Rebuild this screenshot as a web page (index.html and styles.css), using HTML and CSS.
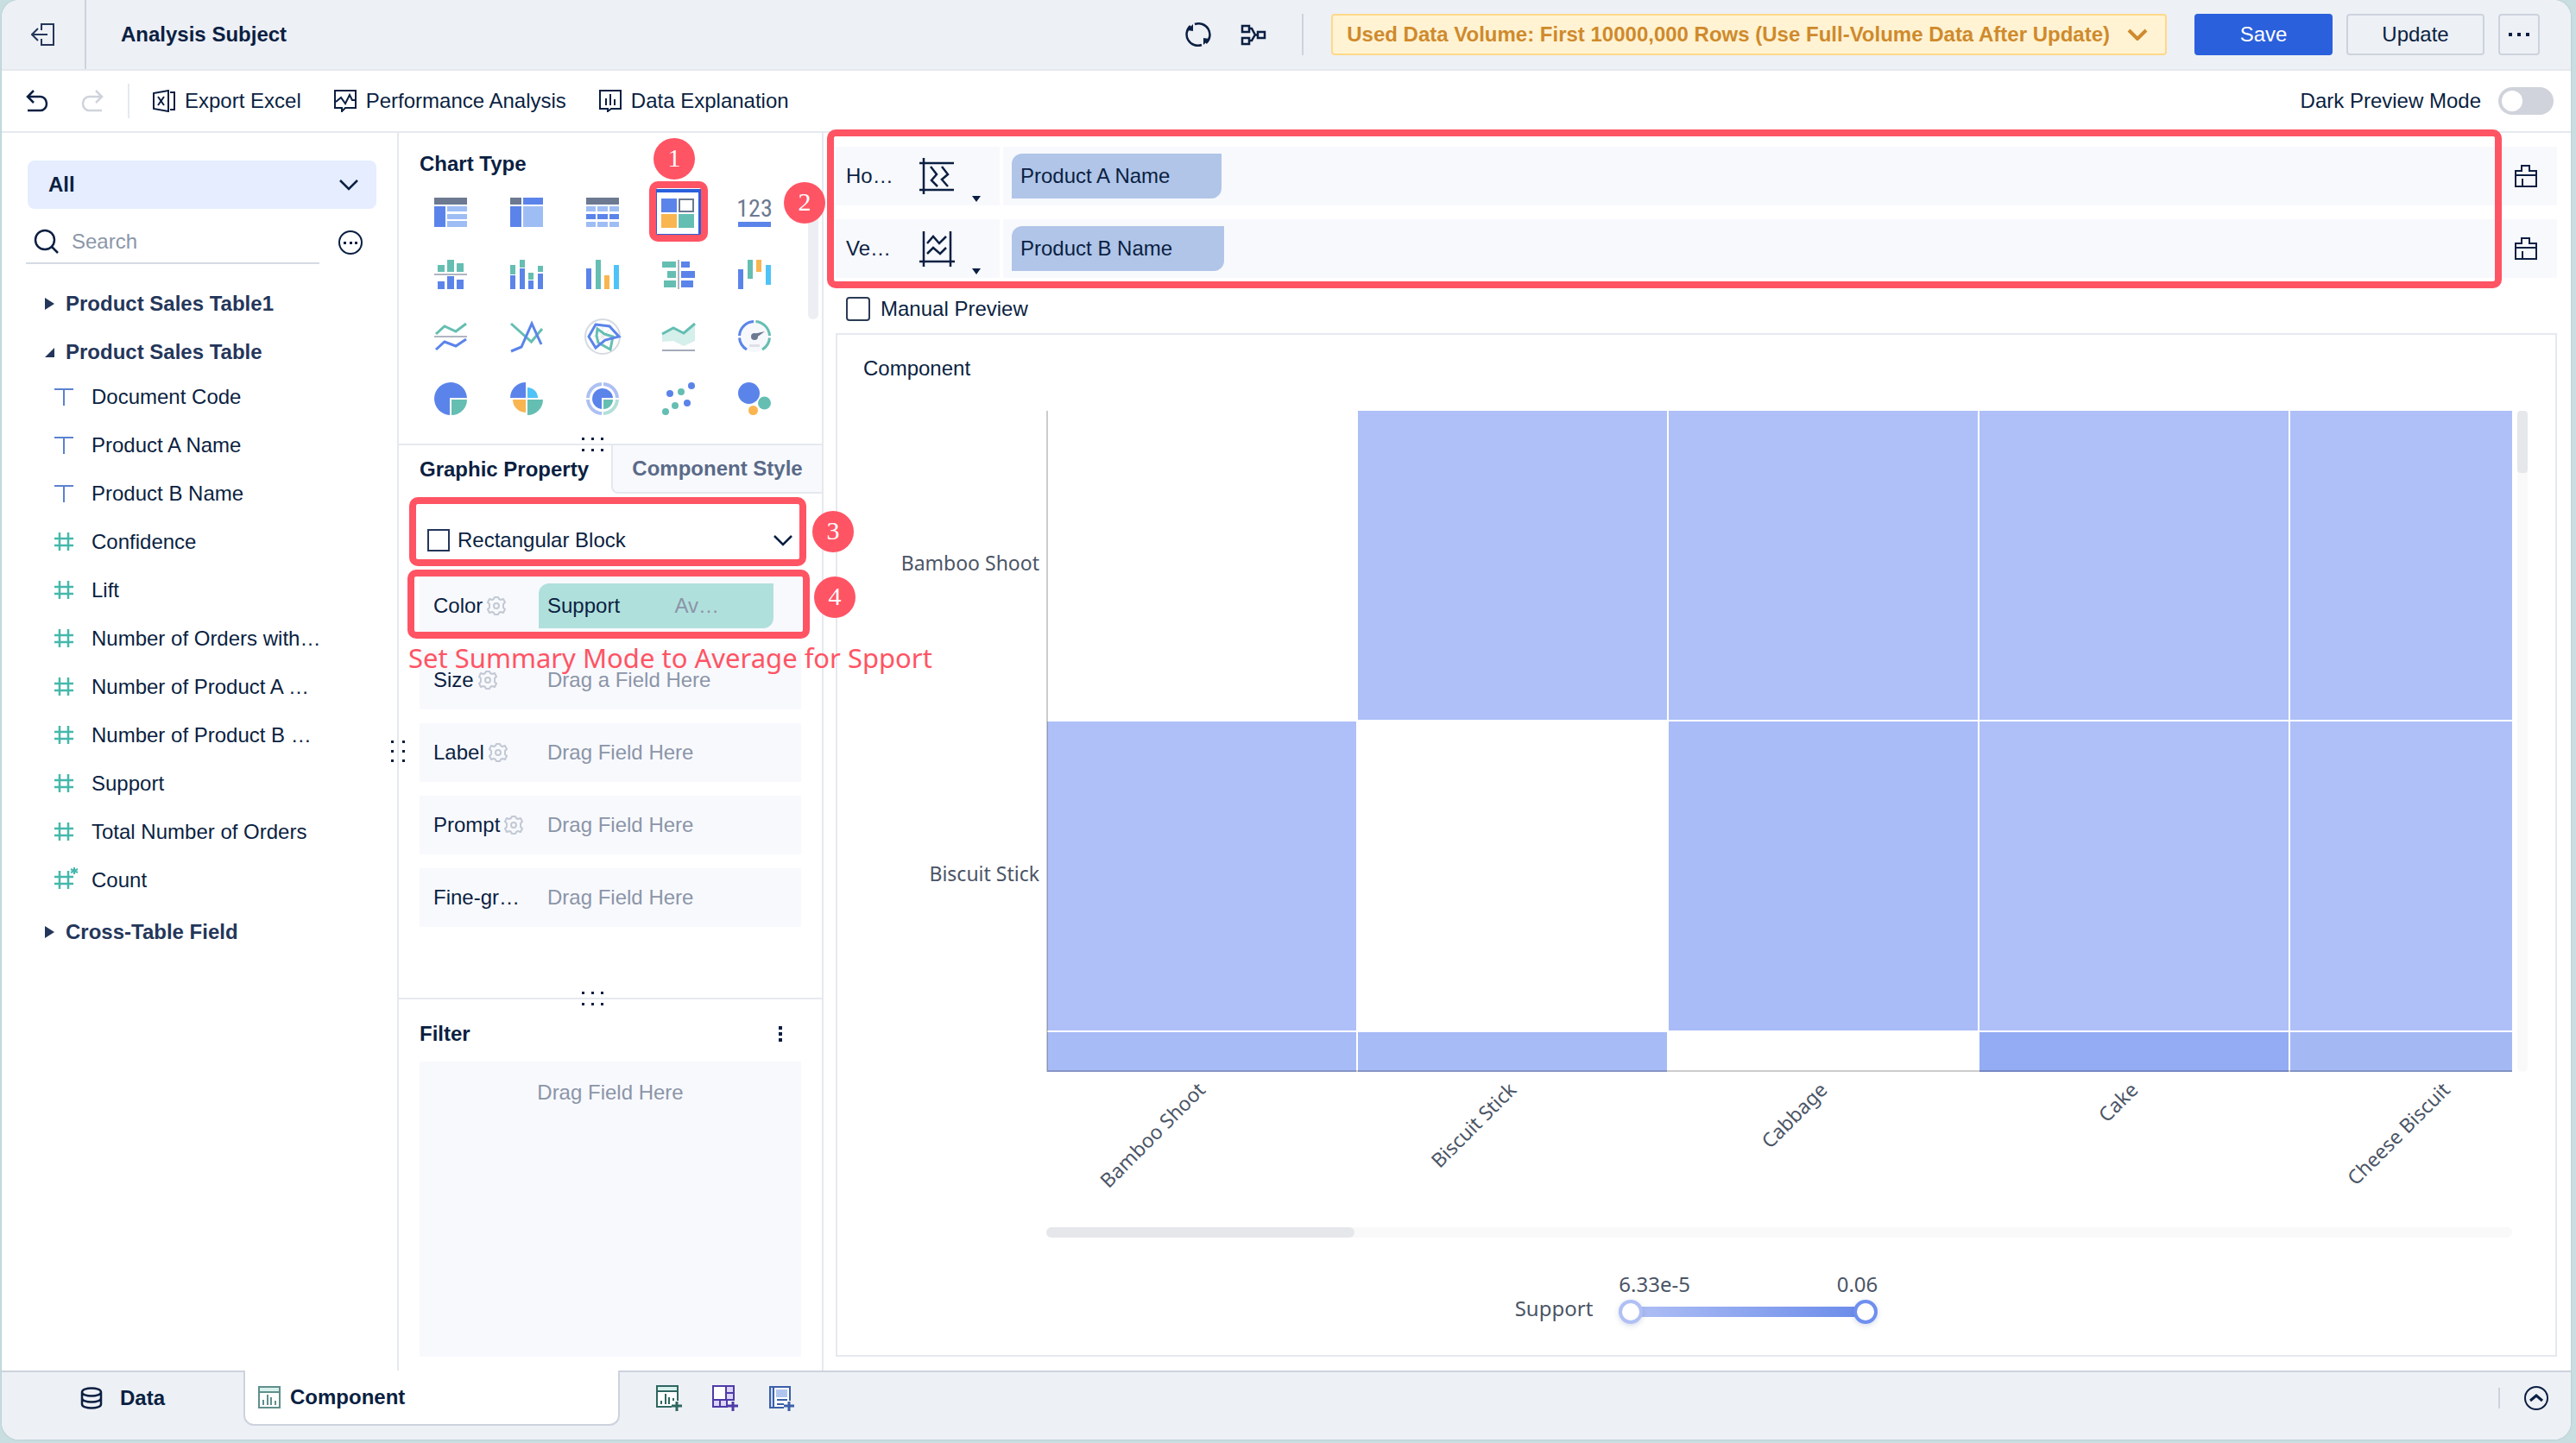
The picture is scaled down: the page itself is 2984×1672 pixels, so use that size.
FILE: index.html
```html
<!DOCTYPE html>
<html lang="en">
<head>
<meta charset="utf-8">
<title>Analysis Subject</title>
<link rel="stylesheet" href="styles.css">
</head>
<body>
<svg class="sprite" aria-hidden="true">
  <symbol id="i-text" viewBox="0 0 22 22"><path d="M0 2h22M11 2v19" fill="none" stroke="#5b82d0" stroke-width="2"/></symbol>
  <symbol id="i-num" viewBox="0 0 22 22"><path d="M0 7h22M0 15h22M6 0v21M16 0v21" fill="none" stroke="#45b8ac" stroke-width="2.500"/></symbol>
  <symbol id="i-gear" viewBox="0 0 22 22"><path d="M8 3l1-2h4l1 2 2 1 3-1 2 4-2 2v4l2 2-2 4-3-1-2 1-1 2H9l-1-2-2-1-3 1-2-4 2-2V9L1 7l2-4 3 1z" fill="none" stroke="#c3c9d4" stroke-width="2" stroke-linejoin="round"/><circle cx="11" cy="11" r="3" fill="none" stroke="#c3c9d4" stroke-width="2"/></symbol>
  <symbol id="i-down" viewBox="0 0 24 14"><path d="M2 2l10 10L22 2" fill="none" stroke="currentColor" stroke-width="2.500"/></symbol>
  <symbol id="i-brush" viewBox="0 0 26 26"><path d="M1 25V7h7V1h9v6h8v18zM1 12h24M9 16v9" fill="none" stroke="currentColor" stroke-width="2"/></symbol>
</svg>

<div class="app">
  <header class="header">
    <button class="back" aria-label="Exit"><svg width="28" height="28" viewBox="0 0 28 28"><path d="M12 9V2h14v24H12v-7M1 14h18M8 7l-7 7 7 7" fill="none" stroke="currentColor" stroke-width="2"/></svg></button>
    <h1 class="title">Analysis Subject</h1>
    <div class="header-icons">
      <button aria-label="Refresh"><svg width="30" height="30" viewBox="0 0 30 30"><path d="M6 5A13 13 0 0 0 19 27M24 25A13 13 0 0 0 11 3" fill="none" stroke="currentColor" stroke-width="2.500"/><path d="M2 10l7-7v8zM28 20l-7 7v-8z" fill="currentColor"/></svg></button>
      <button aria-label="Lineage"><svg width="30" height="26" viewBox="0 0 30 26"><path d="M2 3h8v7H2zM2 17h8v7H2zM20 10h8v7h-8zM10 6h3l4 7.500h3M10 20h3l4-7" fill="none" stroke="currentColor" stroke-width="2.500"/></svg></button>
    </div>
    <div class="header-actions">
      <button class="volume">Used Data Volume: First 10000,000 Rows (Use Full-Volume Data After Update)<svg width="24" height="14" viewBox="0 0 24 14"><path d="M2 2l10 10L22 2" fill="none" stroke="currentColor" stroke-width="4"/></svg></button>
      <div class="buttons">
        <button class="btn primary">Save</button>
        <button class="btn">Update</button>
        <button class="btn more" aria-label="More"><svg width="24" height="4" viewBox="0 0 24 4"><path d="M0 0h4v4H0zM10 0h4v4h-4zM20 0h4v4h-4z" fill="currentColor"/></svg></button>
      </div>
    </div>
  </header>

  <nav class="toolbar">
    <div class="history">
      <button aria-label="Undo"><svg width="26" height="26" viewBox="0 0 26 26"><path d="M9 1L2 8l7 7M2 8h15a7 8 0 0 1 0 16H2" fill="none" stroke="currentColor" stroke-width="2.500"/></svg></button>
      <button class="off" aria-label="Redo" disabled><svg width="26" height="26" viewBox="0 0 26 26"><path d="M17 1l7 7-7 7M24 8H9a7 8 0 0 0 0 16h15" fill="none" stroke="currentColor" stroke-width="2.500"/></svg></button>
    </div>
    <div class="tools">
      <button><svg width="26" height="26" viewBox="0 0 26 26"><path d="M1 4l17-3v24L1 22zM20 3h5v20h-5M6 8l7 10M13 8L6 18" fill="none" stroke="currentColor" stroke-width="2"/></svg>Export Excel</button>
      <button><svg width="26" height="26" viewBox="0 0 26 26"><path d="M1 1h24v20H13l-4 4v-4H1zM2 14l6-5 5 7 5-10 3 6h4" fill="none" stroke="currentColor" stroke-width="2"/></svg>Performance Analysis</button>
      <button><svg width="26" height="26" viewBox="0 0 26 26"><path d="M1 1h24v21H14l-4 3v-3H1zM8 10v8M13 5v13M18 11v7" fill="none" stroke="currentColor" stroke-width="2"/></svg>Data Explanation</button>
    </div>
    <label class="dark">Dark Preview Mode<input type="checkbox" class="switch"></label>
  </nav>

  <main class="workspace">
    <aside class="fields">
      <button class="source">All<svg width="24" height="14"><use href="#i-down"/></svg></button>
      <div class="search-row">
        <label class="search">
          <svg width="30" height="30" viewBox="0 0 30 30"><circle cx="13" cy="13" r="11" fill="none" stroke="currentColor" stroke-width="2.500"/><path d="M21 21l7 7" stroke="currentColor" stroke-width="2.500"/></svg>
          <input type="text" placeholder="Search" aria-label="Search fields">
        </label>
        <button aria-label="Field options"><svg width="30" height="30" viewBox="0 0 30 30"><circle cx="15" cy="15" r="13" fill="none" stroke="currentColor" stroke-width="2"/><path d="M7 14h3v3H7zM14 14h3v3h-3zM20 14h3v3h-3z" fill="currentColor"/></svg></button>
      </div>
      <h2 class="group"><svg width="11" height="14"><path d="M0 0l11 7-11 7z" fill="currentColor"/></svg>Product Sales Table1</h2>
      <h2 class="group"><svg width="11" height="11"><path d="M11 0v11H0z" fill="currentColor"/></svg>Product Sales Table</h2>
      <ul class="field-list">
        <li><svg width="22" height="22"><use href="#i-text"/></svg>Document Code</li>
        <li><svg width="22" height="22"><use href="#i-text"/></svg>Product A Name</li>
        <li><svg width="22" height="22"><use href="#i-text"/></svg>Product B Name</li>
        <li><svg width="22" height="22"><use href="#i-num"/></svg>Confidence</li>
        <li><svg width="22" height="22"><use href="#i-num"/></svg>Lift</li>
        <li><svg width="22" height="22"><use href="#i-num"/></svg>Number of Orders with…</li>
        <li><svg width="22" height="22"><use href="#i-num"/></svg>Number of Product A …</li>
        <li><svg width="22" height="22"><use href="#i-num"/></svg>Number of Product B …</li>
        <li><svg width="22" height="22"><use href="#i-num"/></svg>Support</li>
        <li><svg width="22" height="22"><use href="#i-num"/></svg>Total Number of Orders</li>
        <li><svg width="22" height="22" class="open"><use href="#i-num"/><path d="M23-4v8M19-2l8 4M27-2l-8 4" stroke="#45b8ac" stroke-width="2"/></svg>Count</li>
      </ul>
      <h2 class="group"><svg width="11" height="14"><path d="M0 0l11 7-11 7z" fill="currentColor"/></svg>Cross-Table Field</h2>
      <svg class="grip grip-side" width="16" height="26" viewBox="0 0 16 26"><path d="M0 0h3v3H0zM13 0h3v3h-3zM0 11h3v3H0zM13 11h3v3h-3zM0 22h3v3H0zM13 22h3v3h-3z" fill="currentColor"/></svg>
    </aside>

    <section class="config">
      <div class="types">
        <h2>Chart Type</h2>
        <div class="type-grid">
          <button aria-label="Group table"><svg viewBox="0 0 38 38"><path class="g" d="M0 2h38v8H0z"/><path class="b" d="M0 12h13v24H0z"/><path class="l" d="M15 12h23v6H15zM15 21h23v6H15zM15 29h23v7H15z"/></svg></button>
          <button aria-label="Cross table"><svg viewBox="0 0 38 38"><path class="g" d="M0 2h13v8H0z"/><path class="b" d="M15 2h23v8H15zM0 12h13v24H0z"/><path class="l" d="M15 12h23v24H15z"/></svg></button>
          <button aria-label="Detail table"><svg viewBox="0 0 38 38"><path class="g" d="M0 2h38v8H0z"/><path class="l" d="M0 12h11v6H0zM13 12h12v6H13zM27 12h11v6H27zM0 30h11v6H0zM13 30h12v6H13zM27 30h11v6H27z"/><path class="b" d="M0 21h11v6H0zM13 21h12v6H13zM27 21h11v6H27z"/></svg></button>
          <button class="selected" aria-label="Custom chart"><svg viewBox="0 0 38 38"><path class="b" d="M0 2h18v16H0z"/><path d="M21 3h16v14H21z" fill="#fff" stroke="#6c7991" stroke-width="2"/><path class="o" d="M0 20h18v16H0z"/><path class="t" d="M20 20h18v16H20z"/></svg><span class="frame"></span><span class="badge n1">1</span></button>
          <button aria-label="KPI card"><svg viewBox="0 0 38 38"><text x="19" y="24" text-anchor="middle" class="kpi">123</text><path class="b" d="M0 30h38v6H0z"/></svg><span class="badge n2">2</span></button>

          <button aria-label="Partition column"><svg viewBox="0 0 38 38"><path d="M0 18h38v2H0z" fill="#b0b6c1"/><path class="t" d="M4 8h8v8H4zM15 2h8v14h-8zM26 6h8v10h-8z"/><path class="b" d="M4 27h8v9H4zM15 21h8v15h-8zM26 25h8v11h-8z"/></svg></button>
          <button aria-label="Stacked column"><svg viewBox="0 0 38 38"><path class="t" d="M0 8h6v11H0zM11 2h6v9h-6zM21 17h6v8h-6zM32 9h6v7h-6z"/><path class="b" d="M0 20h6v16H0zM11 12h6v24h-6zM21 26h6v10h-6zM32 18h6v18h-6z"/></svg></button>
          <button aria-label="Column"><svg viewBox="0 0 38 38"><path class="b" d="M0 12h6v24H0z"/><path class="t" d="M11 2h6v34h-6z"/><path class="o" d="M21 20h6v16h-6z"/><path class="c" d="M32 8h6v28h-6z"/></svg></button>
          <button aria-label="Butterfly bar"><svg viewBox="0 0 38 38"><path d="M18 2h2v34h-2z" fill="#b0b6c1"/><path class="t" d="M0 4h16v7H0zM6 15h10v8H6zM2 26h14v8H2z"/><path class="b" d="M22 4h10v7H22zM22 15h16v8H22zM22 26h14v8H22z"/></svg></button>
          <button aria-label="Waterfall"><svg viewBox="0 0 38 38"><path class="b" d="M0 13h6v23H0z"/><path class="t" d="M11 2h6v22h-6z"/><path class="o" d="M21 2h6v14h-6z"/><path class="c" d="M32 8h6v23h-6z"/></svg></button>

          <button aria-label="Partition line"><svg viewBox="0 0 38 38"><path d="M0 18h38v2H0z" fill="#b0b6c1"/><path class="ts" d="M2 16l10-9 13 6L37 4"/><path class="bs" d="M2 34l10-9 13 5 12-8"/></svg></button>
          <button aria-label="Line"><svg viewBox="0 0 38 38"><path class="ts" d="M1 4l23.500 21L37 10"/><path class="bs" d="M1 36l12-5L25 4l11 24"/></svg></button>
          <button aria-label="Radar"><svg viewBox="0 0 38 38"><circle cx="19" cy="19" r="20" fill="none" stroke="#d5dae2" stroke-width="2"/><path d="M19 8v22M8 19h22M11 11l16 16M27 11L11 27" stroke="#e3e6ec" fill="none"/><path class="ts" d="M13 10l8 6 10 3-3 15-14-8-2-8z"/><path class="bs" d="M11 5l16 2 11 12-16 4-11 9-8-13z"/></svg></button>
          <button aria-label="Area"><svg viewBox="0 0 38 38"><path d="M0 15l13-7 12 6L38 3v21l-13 6-12-6-13 1z" fill="#d5efeb"/><path class="ts" d="M0 16l13-7 12 6L38 4"/><path d="M0 34h38v2H0z" fill="#a3abb9"/></svg></button>
          <button aria-label="Gauge"><svg viewBox="0 0 38 38"><circle cx="19" cy="19" r="18" fill="#f7f8fc"/><path class="bs" d="M18 1.500A17.500 17.500 0 0 0 1.500 18M1.500 20.500A17.500 17.500 0 0 0 10 34"/><path class="ts" d="M20.500 1.500A17.500 17.500 0 0 1 36.500 18M36.500 20.500A17.500 17.500 0 0 1 28 34"/><circle class="g" cx="19" cy="19" r="4"/><path class="g" d="M18 16l13-3-11 8z"/><path d="M13 28h12v3H13z" fill="#dde1e7"/></svg></button>

          <button aria-label="Pie"><svg viewBox="0 0 38 38"><path class="b" d="M18 38A19 19 0 1 1 38 18H18z"/><path class="t" d="M20 20h18A18 18 0 0 1 20 38z"/></svg></button>
          <button aria-label="Rose pie"><svg viewBox="0 0 38 38"><path class="b" d="M18 18H0A18 18 0 0 1 18 0z"/><path class="c" d="M20 18h12A12 12 0 0 0 20 6z"/><path class="o" d="M18 20H3a15 15 0 0 0 15 15z"/><path class="t" d="M20 20h18A18 18 0 0 1 20 38z"/></svg></button>
          <button aria-label="Multilayer pie"><svg viewBox="0 0 38 38"><path d="M18 2A17 17 0 0 0 2 18M2 20A17 17 0 0 0 18 36M20 2A17 17 0 0 1 36 18" fill="none" stroke="#adc0f4" stroke-width="4"/><path d="M36 20A17 17 0 0 1 20 36" fill="none" stroke="#b2dfda" stroke-width="4"/><path class="b" d="M18 31A12 12 0 1 1 31 18H18z"/><path class="t" d="M20 20h11A11 11 0 0 1 20 31z"/></svg></button>
          <button aria-label="Scatter"><svg viewBox="0 0 38 38"><g class="b"><circle cx="34" cy="4" r="4"/><circle cx="9" cy="13" r="4"/><circle cx="29" cy="24" r="4"/></g><g class="t"><circle cx="22" cy="11" r="4"/><circle cx="15" cy="27" r="4"/><circle cx="4" cy="34" r="4"/></g></svg></button>
          <button aria-label="Bubble"><svg viewBox="0 0 38 38"><circle class="b" cx="12.500" cy="12.500" r="12.500"/><circle class="t" cx="30.500" cy="24" r="7.500"/><circle class="o" cx="17.500" cy="32.500" r="5.500"/></svg></button>
        </div>
        <span class="types-scroll"></span>
        <svg class="grip grip-bottom" width="26" height="16" viewBox="0 0 26 16"><path d="M0 0h3v3H0zM11 0h3v3h-3zM22 0h3v3h-3zM0 13h3v3H0zM11 13h3v3h-3zM22 13h3v3h-3z" fill="currentColor"/></svg>
      </div>

      <div class="props">
        <div class="tabs">
          <button class="tab on">Graphic Property</button>
          <button class="tab">Component Style</button>
        </div>
        <div class="shape">
          <button class="shape-pick"><i class="square"></i><span>Rectangular Block</span><svg width="24" height="14"><use href="#i-down"/></svg></button>
          <span class="frame"></span><span class="badge n3">3</span>
        </div>
        <div class="slots">
          <div class="slot color">
            <span class="slot-name">Color<svg width="22" height="22"><use href="#i-gear"/></svg></span>
            <span class="chip teal"><span>Support</span><span class="agg">Av…</span></span>
            <span class="frame"></span><span class="badge n4">4</span>
            <span class="note">Set Summary Mode to Average for Spport</span>
          </div>
          <div class="slot"><span class="slot-name">Size<svg width="22" height="22"><use href="#i-gear"/></svg></span><span class="hint">Drag a Field Here</span></div>
          <div class="slot"><span class="slot-name">Label<svg width="22" height="22"><use href="#i-gear"/></svg></span><span class="hint">Drag Field Here</span></div>
          <div class="slot"><span class="slot-name">Prompt<svg width="22" height="22"><use href="#i-gear"/></svg></span><span class="hint">Drag Field Here</span></div>
          <div class="slot"><span class="slot-name">Fine-gr…</span><span class="hint">Drag Field Here</span></div>
        </div>
        <svg class="grip grip-bottom" width="26" height="16" viewBox="0 0 26 16"><path d="M0 0h3v3H0zM11 0h3v3h-3zM22 0h3v3h-3zM0 13h3v3H0zM11 13h3v3h-3zM22 13h3v3h-3z" fill="currentColor"/></svg>
      </div>

      <div class="filter">
        <div class="filter-head"><h2>Filter</h2><button aria-label="Filter options"><svg width="4" height="18" viewBox="0 0 4 18"><path d="M0 0h4v4H0zM0 7h4v4H0zM0 14h4v4H0z" fill="currentColor"/></svg></button></div>
        <div class="drop">Drag Field Here</div>
      </div>
    </section>

    <section class="canvas">
      <div class="axes">
        <div class="axis">
          <div class="axis-head"><span>Ho…</span><button aria-label="Horizontal axis layout"><svg width="42" height="44" viewBox="0 0 42 44"><path d="M1 7h40M1 38h40M6 1v42M14 11l7 9-6 7 7 7M27 11l7 9-7 6 7 8" fill="none" stroke="currentColor" stroke-width="2.500"/></svg><i class="caret"></i></button></div>
          <div class="axis-fields"><span class="chip blue">Product A Name</span></div>
          <button class="clear" aria-label="Clear horizontal axis"><svg width="26" height="26"><use href="#i-brush"/></svg></button>
        </div>
        <div class="axis">
          <div class="axis-head"><span>Ve…</span><button aria-label="Vertical axis layout"><svg width="42" height="44" viewBox="0 0 42 44"><path d="M6 2v41M37 2v41M1 37h41M10 16l7-8 7 8 8-8M10 28l7-7 8 7 7-7" fill="none" stroke="currentColor" stroke-width="2.500"/></svg><i class="caret"></i></button></div>
          <div class="axis-fields"><span class="chip blue">Product B Name</span></div>
          <button class="clear" aria-label="Clear vertical axis"><svg width="26" height="26"><use href="#i-brush"/></svg></button>
        </div>
        <span class="frame"></span>
      </div>
      <label class="manual"><input type="checkbox" class="box">Manual Preview</label>

      <div class="card">
        <h2>Component</h2>
        <div class="chart">
          <div class="y-labels"><span>Bamboo Shoot</span><span>Biscuit Stick</span></div>
          <div class="heat">
            <i class="h0"></i><i class="h1"></i><i class="h1"></i><i class="h1"></i><i class="h1"></i>
            <i class="h1"></i><i class="h0"></i><i class="h2"></i><i class="h1"></i><i class="h1"></i>
            <i class="h3"></i><i class="h3"></i><i class="h0"></i><i class="h5"></i><i class="h4"></i>
          </div>
          <div class="v-scroll"><i></i></div>
          <div class="x-labels">
            <div><span>Bamboo Shoot</span></div><div><span>Biscuit Stick</span></div><div><span>Cabbage</span></div><div><span>Cake</span></div><div><span>Cheese Biscuit</span></div>
          </div>
          <div class="h-scroll"><i></i></div>
        </div>
        <div class="legend">
          <span>Support</span>
          <div class="legend-scale">
            <div class="legend-values"><span>6.33e-5</span><span>0.06</span></div>
            <div class="range">
              <input type="range" class="low" min="0" max="100" value="0" aria-label="Lowest support">
              <input type="range" class="high" min="0" max="100" value="100" aria-label="Highest support">
            </div>
          </div>
        </div>
      </div>
    </section>
  </main>

  <footer class="footer">
    <button class="sheet data"><svg width="26" height="26" viewBox="0 0 26 26"><path d="M2 6c0-6 22-6 22 0v14c0 6-22 6-22 0zM2 6c0 6 22 6 22 0M2 13c0 6 22 6 22 0" fill="none" stroke="currentColor" stroke-width="2.500"/></svg>Data</button>
    <button class="sheet active"><svg width="26" height="26" viewBox="0 0 26 26"><path d="M1 1h24v24H1z" fill="#fff" stroke="#5f8f8c" stroke-width="2"/><path d="M2 2h22v5H2z" fill="#d8f0ec"/><path d="M2 7h22M6 22v-6M11 22V10M15 22v-9M20 22v-5" stroke="#5f8f8c" stroke-width="2"/></svg>Component</button>
    <div class="adders">
      <button aria-label="Add component"><svg width="30" height="30" viewBox="0 0 30 30"><path d="M18 25H1V1h24v17" fill="#fff" stroke="#2f6660" stroke-width="2"/><path d="M2 2h22v4H2z" fill="#d8f0ec"/><path d="M2 7h22M6 22v-4M11 22V10M15 22v-8M20 18v-3" stroke="#2f6660" stroke-width="2"/><path d="M24 19v11M18 24h12" stroke="#2f6660" stroke-width="3"/></svg></button>
      <button aria-label="Add dashboard"><svg width="30" height="30" viewBox="0 0 30 30"><path d="M1 1h24v17H1z" fill="#fff"/><path d="M16 1h9v17h-7v7H1v-8h15z" fill="#dcd5f7"/><path d="M18 25H1V1h24v17M16 1v16M16 9h9M1 17h24M9 17v8M17 17v8" fill="none" stroke="#4f3aa8" stroke-width="2"/><path d="M24 19v11M18 24h12" stroke="#4f3aa8" stroke-width="3"/></svg></button>
      <button aria-label="Add report"><svg width="30" height="30" viewBox="0 0 30 30"><path d="M1 2h24v24H1z" fill="#fff"/><path d="M2 2h4v23H2z" fill="#c9daf5"/><path d="M9 5h13v9H9z" fill="#afc5ee"/><path d="M18 26H2V2h23v16M6 2v24M10 17h12M10 22h8" fill="none" stroke="#3b5fa8" stroke-width="2"/><path d="M24 19v11M18 24h12" stroke="#3b5fa8" stroke-width="3"/></svg></button>
    </div>
    <button class="collapse" aria-label="Expand"><svg width="28" height="28" viewBox="0 0 28 28"><circle cx="14" cy="14" r="13" fill="none" stroke="currentColor" stroke-width="2"/><path d="M7 17l7-6 7 6" fill="none" stroke="currentColor" stroke-width="3"/></svg></button>
  </footer>
</div>
</body>
</html>
```
FILE: styles.css
```css
:root {
  --ink: #0b1f42;
  --ink-soft: #24365a;
  --muted: #8b95a8;
  --line: #e5e9ef;
  --bar: #edf0f5;
  --edge: #cdd3dd;
  --slot: #f8f9fd;
  --blue: #5b84ea;
  --teal: #65beb2;
  --mark: #ff5464;
}

* { box-sizing: border-box; }

body {
  margin: 0;
  padding: 0 6px 4px 2px;
  min-height: 100vh;
  display: flex;
  background: #c8dee1;
  color: var(--ink);
  font: 24px/32px "Liberation Sans", Arial, sans-serif;
}

.sprite { position: absolute; width: 0; height: 0; }
svg { display: block; flex: none; }
.open { overflow: visible; }

button {
  display: flex;
  align-items: center;
  justify-content: center;
  padding: 0;
  border: 0;
  background: none;
  color: inherit;
  font: inherit;
}

h1, h2 { margin: 0; font-size: 24px; line-height: 32px; font-weight: 700; }

.app {
  flex: 1;
  min-width: 0;
  display: flex;
  flex-direction: column;
  background: #fff;
  border-radius: 20px;
  overflow: hidden;
  box-shadow: 0 0 2px #9fb9bd;
}

/* Header */
.header {
  display: flex;
  align-items: center;
  height: 82px;
  background: var(--bar);
  border-bottom: 2px solid var(--line);
}
.back { width: 98px; align-self: stretch; border-right: 2px solid var(--edge); color: var(--ink-soft); }
.title { margin-left: 40px; }
.header-icons {
  margin-left: auto;
  display: flex;
  align-items: center;
  gap: 34px;
  height: 48px;
  padding-right: 41px;
  border-right: 2px solid var(--edge);
}
.header-actions { display: flex; gap: 32px; margin: 0 36px 0 32px; }
.volume {
  gap: 20px;
  height: 48px;
  padding: 0 20px 0 16px;
  border: 2px solid #ffd98a;
  border-radius: 4px;
  background: #fff3d3;
  color: #cf8a2c;
  font-weight: 700;
}
.buttons { display: flex; gap: 16px; }
.btn { width: 160px; height: 48px; border: 2px solid var(--edge); border-radius: 4px; }
.btn.primary { background: #2a60dc; border-color: #2a60dc; color: #fff; }
.btn.more { width: 48px; }

/* Toolbar */
.toolbar {
  display: flex;
  align-items: center;
  height: 72px;
  padding: 0 20px 0 28px;
  border-bottom: 2px solid var(--line);
}
.history { display: flex; align-items: center; gap: 38px; height: 40px; padding-right: 28px; border-right: 2px solid var(--line); }
.off { color: #cfd3db; }
.tools { display: flex; gap: 38px; margin-left: 27px; }
.tools button { gap: 11px; }
.dark { margin-left: auto; display: flex; align-items: center; gap: 20px; }
.switch {
  appearance: none;
  margin: 0;
  width: 64px;
  height: 32px;
  padding: 4px;
  border-radius: 16px;
  background: #d0d3db;
}
.switch::before { content: ""; display: block; width: 24px; height: 24px; border-radius: 50%; background: #fff; }

/* Workspace */
.workspace { flex: 1; display: flex; }
.fields { position: relative; flex: none; width: 460px; padding: 32px 24px 32px 30px; border-right: 2px solid var(--line); }
.source {
  width: 100%;
  height: 56px;
  padding: 0 20px 0 24px;
  justify-content: space-between;
  border-radius: 8px;
  background: #e5edff;
  font-weight: 700;
}
.search-row { display: flex; align-items: center; justify-content: space-between; padding-right: 15px; margin: 14px 0 22px -2px; }
.search { display: flex; align-items: center; gap: 14px; width: 340px; height: 50px; padding-left: 9px; border-bottom: 2px solid #d5dbe2; }
.search input { flex: 1; min-width: 0; padding: 0; border: 0; background: none; font: inherit; color: inherit; }
.search input::placeholder { color: #8b97a8; opacity: 1; }
.group { display: flex; align-items: center; gap: 13px; height: 48px; margin-top: 8px; padding-left: 20px; color: var(--ink-soft); }
.field-list { margin: 0; padding: 0 0 0 31px; list-style: none; }
.field-list li { display: flex; align-items: center; gap: 21px; height: 56px; }

.grip { position: absolute; z-index: 1; }
.grip-side { right: -9px; top: 704px; }
.grip-bottom { left: 212px; bottom: -9px; }

/* Chart configuration */
.config { flex: none; width: 492px; display: flex; flex-direction: column; border-right: 2px solid var(--line); }
.types { position: relative; height: 362px; padding-top: 20px; border-bottom: 2px solid var(--line); }
.types h2 { padding-left: 24px; }
.type-grid { display: grid; grid-template-columns: repeat(5, 88px); grid-auto-rows: 72px; padding: 4px 0 0 16px; justify-items: center; align-items: center; }
.type-grid button { position: relative; width: 54px; height: 54px; }
.type-grid svg { width: 38px; height: 38px; overflow: visible; }
.type-grid .selected { border: solid #2a60dc; border-width: 4px 4px 2px 2px; }
.types-scroll { position: absolute; right: 4px; top: 70px; width: 12px; height: 146px; border-radius: 6px; background: #edeef3; }
.g { fill: #6c7991; }
.b { fill: var(--blue); }
.l { fill: #9fbdf5; }
.o { fill: #f9b550; }
.t { fill: var(--teal); }
.c { fill: #4fc3f7; }
.ts, .bs { fill: none; stroke: var(--teal); stroke-width: 3px; }
.bs { stroke: var(--blue); }
.kpi { font: 28px "Liberation Sans Narrow", "Roboto Condensed", Roboto, sans-serif; fill: #6c7991; }

.props { position: relative; height: 642px; border-bottom: 2px solid var(--line); }
.tabs { display: flex; height: 56px; }
.tab { flex: 1; font-weight: 700; background: var(--slot); color: #5a6a88; border: solid var(--line); border-width: 0 0 2px 2px; border-bottom-left-radius: 8px; }
.tab.on { flex: none; width: 246px; padding-right: 2px; background: none; color: var(--ink); border: 0; }
.shape { position: relative; padding: 28px 32px 0 33px; height: 96px; }
.shape-pick { width: 100%; height: 52px; gap: 9px; padding-right: 1px; }
.shape-pick span { flex: 1; text-align: left; }
.square { width: 26px; height: 26px; border: 2px solid var(--ink-soft); }
.slots { display: flex; flex-direction: column; gap: 16px; padding: 0 24px; }
.slot { position: relative; display: flex; align-items: center; height: 68px; padding-left: 16px; background: var(--slot); }
.slot.color { margin-bottom: 2px; }
.slot-name { display: flex; align-items: center; gap: 5px; width: 132px; }
.hint { color: var(--muted); }
.chip { display: flex; align-items: center; height: 52px; padding: 0 60px 0 10px; border-radius: 12px 0; }
.chip.blue { background: #b0c5e8; }
.chip.teal { width: 272px; margin-left: -10px; padding-right: 63px; justify-content: space-between; background: #b0e0dc; }
.agg { color: var(--muted); }

.filter { flex: 1; display: flex; flex-direction: column; padding: 24px 24px 16px; }
.filter-head { display: flex; align-items: center; justify-content: space-between; padding-right: 22px; margin-bottom: 16px; }
.drop { flex: 1; padding-top: 20px; text-align: center; color: var(--muted); background: var(--slot); }

/* Guide marks */
.frame { position: absolute; border: 8px solid var(--mark); border-radius: 10px; z-index: 2; }
.badge {
  position: absolute;
  z-index: 3;
  width: 48px;
  height: 48px;
  border-radius: 50%;
  background: var(--mark);
  color: #fff;
  font: 30px/46px "Liberation Serif", serif;
  text-align: center;
}
.selected .frame { inset: -13px -11px -9px -9px; }
.n1 { left: -4px; top: -63px; }
.n2 { left: 61px; top: -8px; }
.shape .frame { inset: 4px 18px 12px 12px; }
.n3 { left: 479px; top: 20px; }
.color .frame { inset: -8px -10px -4px -14px; }
.n4 { left: 457px; top: 0; }
.note { position: absolute; z-index: 3; left: -13px; top: 72px; white-space: nowrap; color: var(--mark); font: 31px/44px "Noto Sans", "Open Sans", sans-serif; }

/* Canvas */
.canvas { flex: 1; min-width: 0; display: flex; flex-direction: column; padding: 16px 16px 16px 14px; }
.axes { position: relative; display: grid; gap: 16px; }
.axes > .frame { inset: -20px 64px -12px -10px; }
.axis { display: flex; height: 68px; background: var(--slot); }
.axis-head { display: flex; align-items: center; width: 194px; padding-left: 12px; border-right: 4px solid #fff; }
.axis-head span { width: 84px; }
.axis-head button { position: relative; height: 68px; }
.caret { position: absolute; right: -30px; bottom: 4px; border: 5px solid transparent; border-top: 7px solid var(--ink); border-bottom: 0; }
.axis-fields { flex: 1; display: flex; align-items: center; padding-left: 10px; }
.clear { width: 72px; }
.manual { display: flex; align-items: center; gap: 12px; padding: 20px 0 12px 12px; }
.box { appearance: none; margin: 0; width: 28px; height: 28px; border: 2px solid #2b3b55; border-radius: 4px; }
.card { flex: 1; display: flex; flex-direction: column; border: 2px solid var(--line); }
.card h2 { padding: 23px 30px; font-weight: 400; }

/* Heat map */
.chart {
  display: grid;
  grid-template-columns: 242px minmax(0, 1fr) 18px;
  padding: 10px 32px 0 0;
  color: #4b5566;
  font: 23px/32px "Noto Sans", "Open Sans", sans-serif;
}
.y-labels { display: grid; grid-template-rows: 358px 358px 46px; gap: 2px; align-items: center; justify-items: end; padding-right: 8px; }
.y-labels span { padding-bottom: 6px; }
.heat { position: relative; display: grid; grid-template-columns: repeat(4, 358fr) 257fr; grid-template-rows: 358px 358px 46px; gap: 2px; padding-left: 1px; }
.heat::after { content: ""; position: absolute; inset: 0; border: solid rgba(0, 0, 0, .2); border-width: 0 0 2px 2px; }
.h1 { background: #aec0f7; }
.h2 { background: #a9bcf7; }
.h3 { background: #a7bbf6; }
.h4 { background: #a4b9f4; }
.h5 { background: #93acf4; }
.v-scroll { margin-left: 6px; border-radius: 6px; background: #f9f9f9; }
.v-scroll i { display: block; height: 72px; border-radius: 4px; background: #e6e7eb; }
.x-labels { grid-column: 2; display: grid; grid-template-columns: repeat(4, 358fr) 257fr; gap: 2px; height: 180px; }
.x-labels div { display: flex; justify-content: flex-end; width: 50%; height: 32px; white-space: nowrap; }
.x-labels div:last-child { width: 70%; }
.x-labels span { transform: rotate(-45deg); transform-origin: 100% 50%; }
.h-scroll { grid-column: 2; height: 12px; border-radius: 6px; background: #f9f9f9; }
.h-scroll i { display: block; width: 21%; height: 12px; border-radius: 6px; background: #e6e7eb; }

.legend { display: flex; justify-content: center; align-items: flex-end; gap: 30px; padding: 38px 0 36px; color: #4b5566; font: 24px/32px "Noto Sans", "Open Sans", sans-serif; }
.legend > span { padding-bottom: 2px; }
.legend-scale { width: 300px; }
.legend-values { display: flex; justify-content: space-between; margin-bottom: 2px; }
.range { display: grid; height: 28px; background: linear-gradient(90deg, #b0c0f5, #6a8bea) center / 272px 12px no-repeat; }
.range input { grid-area: 1 / 1; appearance: none; width: 100%; height: 28px; margin: 0; background: none; pointer-events: none; }
.range input::-webkit-slider-thumb {
  appearance: none;
  width: 28px;
  height: 28px;
  border: 4px solid #b0c0f5;
  border-radius: 50%;
  background: #fff;
  box-shadow: 0 2px 6px rgba(60, 80, 140, .2);
  pointer-events: auto;
}
.range .high::-webkit-slider-thumb { border-color: #6f8ff0; }

/* Footer */
.footer { display: flex; height: 80px; background: linear-gradient(var(--edge) 2px, var(--bar) 2px); }
.sheet { height: 64px; gap: 11px; font-weight: 700; }
.data { width: 280px; gap: 20px; }
.active { width: 436px; justify-content: flex-start; padding-left: 15px; background: #fff; border: solid var(--edge); border-width: 0 2px 2px; border-radius: 0 0 12px 12px; }
.adders { display: flex; align-items: center; gap: 35px; height: 64px; margin-left: 42px; }
.collapse { align-self: flex-start; height: 24px; margin: 20px 26px 0 auto; padding-left: 28px; border-left: 2px solid var(--edge); }
```
